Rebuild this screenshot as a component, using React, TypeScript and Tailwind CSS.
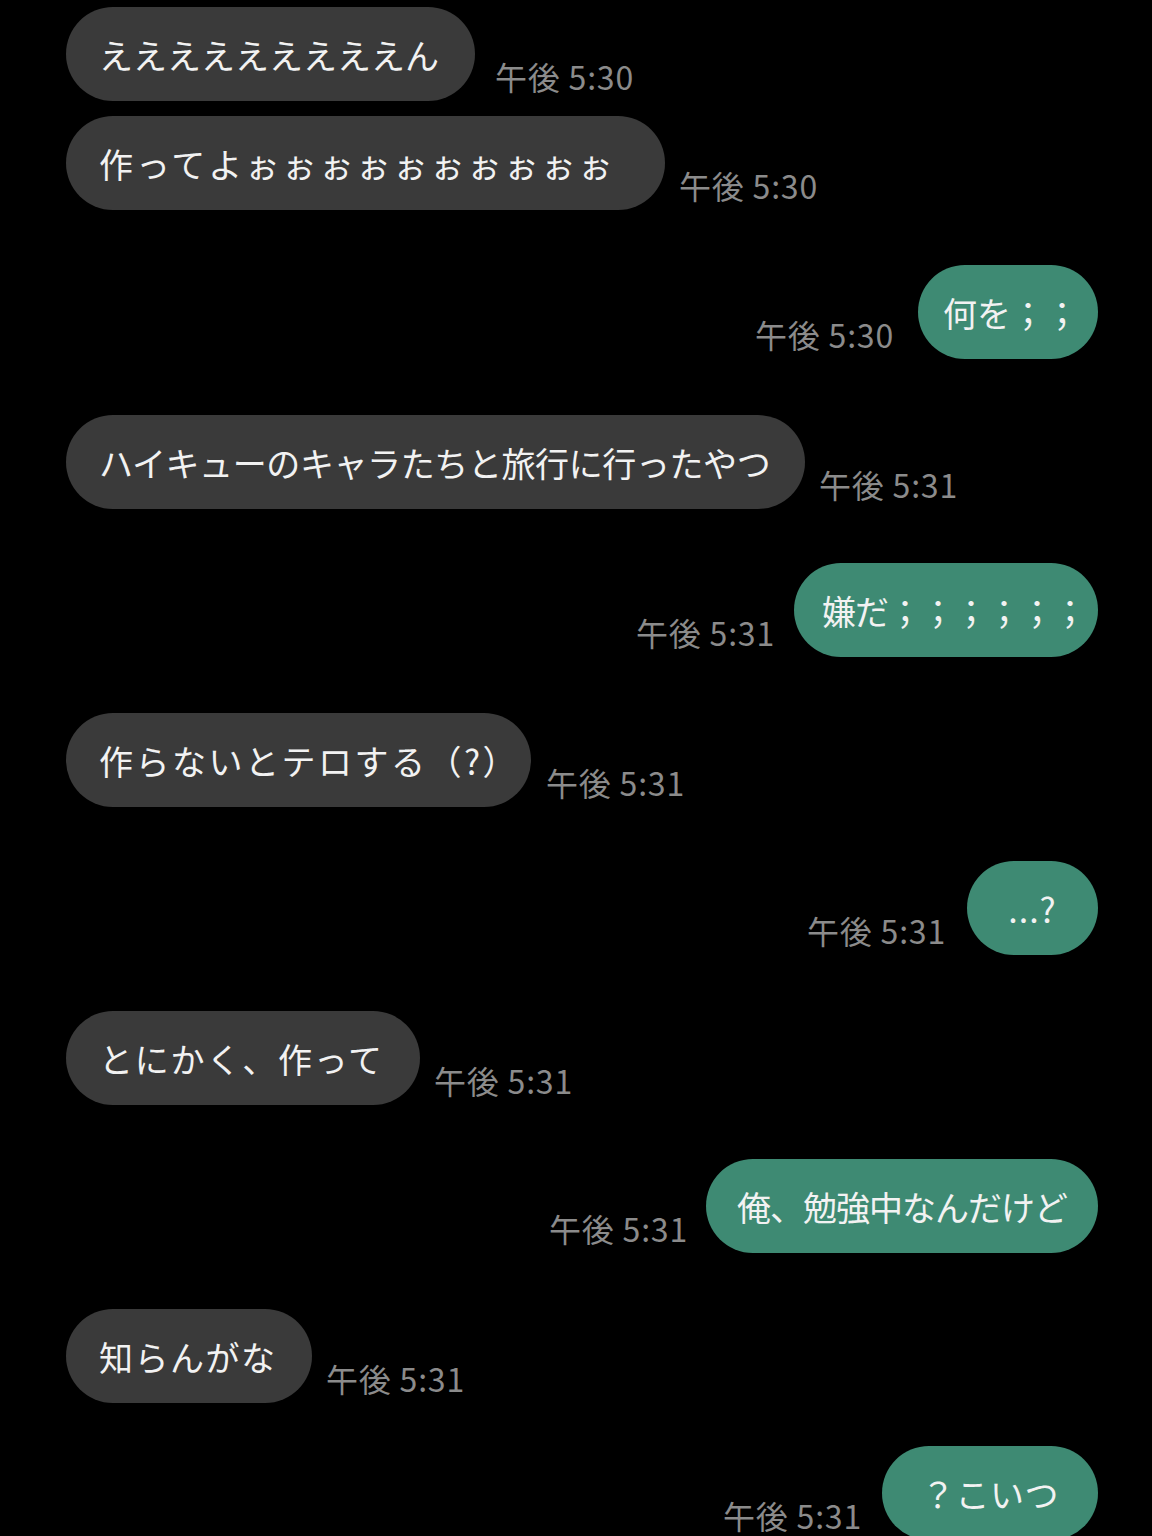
import React from "react";

type Msg = {
  side: "l" | "r";
  text: string;
  time: string;
  cls: string;
  row: string;
};

const msgs: Msg[] = [
  { side: "l", text: "えええええええええん", time: "午後 5:30", cls: "w-[409px]", row: "mt-[7px] gap-[20px]" },
  { side: "l", text: "作ってよぉぉぉぉぉぉぉぉぉぉ", time: "午後 5:30", cls: "w-[599px] tracking-[3px]", row: "mt-[15px] gap-[14px]" },
  { side: "r", text: "何を；；", time: "午後 5:30", cls: "w-[180px] pl-[6px]", row: "mt-[55px] gap-[24px]" },
  { side: "l", text: "ハイキューのキャラたちと旅行に行ったやつ", time: "午後 5:31", cls: "w-[739px] tracking-[-0.4px]", row: "mt-[56px] gap-[14px]" },
  { side: "r", text: "嫌だ；；；；；；", time: "午後 5:31", cls: "w-[304px] pl-[16px] tracking-[-1px]", row: "mt-[54px] gap-[19px]" },
  { side: "l", text: "作らないとテロする（?）", time: "午後 5:31", cls: "w-[465px] tracking-[2.5px]", row: "mt-[56px] gap-[15px]" },
  { side: "r", text: "...?", time: "午後 5:31", cls: "w-[131px] tracking-[1px]", row: "mt-[54px] gap-[21px]" },
  { side: "l", text: "とにかく、作って", time: "午後 5:31", cls: "w-[354px] tracking-[1.8px]", row: "mt-[56px] gap-[14px]" },
  { side: "r", text: "俺、勉強中なんだけど", time: "午後 5:31", cls: "w-[392px] tracking-[-1px]", row: "mt-[54px] gap-[18px]" },
  { side: "l", text: "知らんがな", time: "午後 5:31", cls: "w-[246px] tracking-[1.5px]", row: "mt-[56px] gap-[14px]" },
  { side: "r", text: "？こいつ", time: "午後 5:31", cls: "w-[216px] tracking-[0.5px]", row: "mt-[43px] gap-[20px]" },
];

function Time({ t }: { t: string }) {
  return (
    <span className="text-[32px] tracking-[0.8px] leading-none text-[#8b8b8b] whitespace-nowrap mb-[9px]">{t}</span>
  );
}

export default function App() {
  return (
    <div className="w-[1152px] h-[1536px] bg-black overflow-hidden pl-[66px] pr-[54px] font-['Noto_Sans_CJK_JP','Noto_Sans',sans-serif]">
      {msgs.map((m, i) =>
        m.side === "l" ? (
          <div key={i} className={`flex items-end ${m.row}`}>
            <div
              className={`h-[94px] rounded-full bg-[#3a3a3a] flex items-center pl-[33px] text-[34px] text-[#f2f2f2] whitespace-nowrap shrink-0 ${m.cls}`}
            >
              {m.text}
            </div>
            <Time t={m.time} />
          </div>
        ) : (
          <div key={i} className={`flex items-end justify-end ${m.row}`}>
            <Time t={m.time} />
            <div
              className={`h-[94px] rounded-full bg-[#3e8a73] flex items-center justify-center text-[34px] text-[#f2f2f2] whitespace-nowrap shrink-0 ${m.cls}`}
            >
              {m.text}
            </div>
          </div>
        )
      )}
    </div>
  );
}
